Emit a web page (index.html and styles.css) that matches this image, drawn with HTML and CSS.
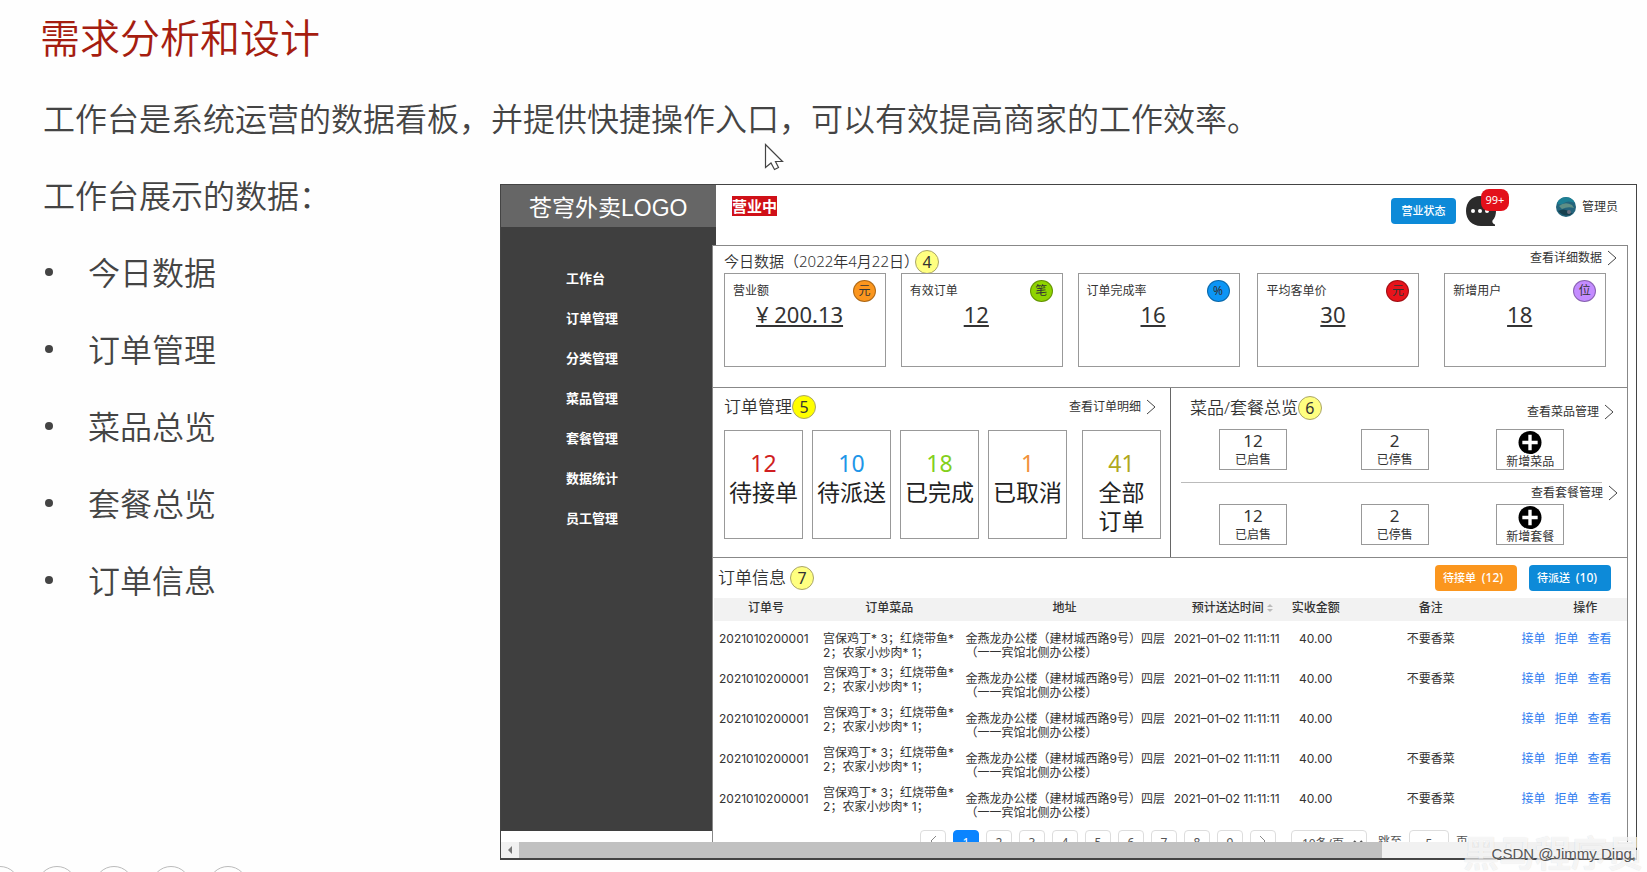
FILE: index.html
```html
<!DOCTYPE html>
<html lang="zh-CN">
<head>
<meta charset="utf-8">
<title>需求分析和设计</title>
<link rel="stylesheet" href="styles.css">
</head>
<body>
<h1 class="slide-title">需求分析和设计</h1>
<p class="lead">工作台是系统运营的数据看板，并提供快捷操作入口，可以有效提高商家的工作效率。</p>
<svg class="cursor" viewBox="0 0 20 28" aria-hidden="true"><path d="M1.500 1.500V24.500L7 20L10.500 26.500L14.500 24.500L11.500 18.500H18.500Z" fill="#fff" stroke="#444" stroke-width="1.200"/></svg>
<div class="slide-body">
  <div class="outline">
    <p>工作台展示的数据：</p>
    <ul>
      <li>今日数据</li>
      <li>订单管理</li>
      <li>菜品总览</li>
      <li>套餐总览</li>
      <li>订单信息</li>
    </ul>
  </div>
  <div class="frame">
    <div class="viewport">
      <aside class="sidebar">
        <div class="logo">苍穹外卖LOGO</div>
        <nav class="menu">
          <a href="#">工作台</a>
          <a href="#">订单管理</a>
          <a href="#">分类管理</a>
          <a href="#">菜品管理</a>
          <a href="#">套餐管理</a>
          <a href="#">数据统计</a>
          <a href="#">员工管理</a>
        </nav>
      </aside>
      <main class="main">
        <header class="topbar">
          <span class="open-tag">营业中</span>
          <button class="btn btn-state" type="button">营业状态</button>
          <div class="messages">
            <svg viewBox="0 0 32 32" aria-hidden="true"><path d="M15 1C6.500 1 1 7.500 1 16S7 31 16 31H30V29.500C27.500 28.500 27 27 27.500 25.500C30 23 31 19.500 31 16C31 7.500 24 1 15 1Z" fill="#2b2b2b"/><circle cx="8" cy="16" r="2" fill="#fff"/><circle cx="15" cy="16" r="2" fill="#fff"/><circle cx="22" cy="16" r="2" fill="#fff"/></svg>
            <span class="count">99+</span>
          </div>
          <div class="user">
            <svg viewBox="0 0 20 20" aria-hidden="true"><circle cx="10" cy="10" r="10" fill="#24647c"/><path d="M1 6A10 10 0 0 1 19 6Q12 3 8 6T1 6Z" fill="#1d8095"/><path d="M3 9Q9 4 16 8L18 11Q12 9 6 12Z" fill="#5f8f86"/><path d="M2 14Q8 11 12 14T17 16Q10 22 2 14Z" fill="#17404f"/><circle cx="13" cy="15" r="2" fill="#6b6f80"/></svg>
            <span>管理员</span>
          </div>
        </header>

        <section class="today">
          <div class="head">
            <h2 class="small">今日数据（2022年4月22日）</h2><span class="mark">4</span>
            <a class="more" href="#">查看详细数据<svg viewBox="0 0 10 16" aria-hidden="true"><path d="M1 1L9 8L1 15"/></svg></a>
          </div>
          <div class="stats">
            <div class="stat"><span>营业额</span><i class="dot orange">元</i><b>¥ 200.13</b></div>
            <div class="stat"><span>有效订单</span><i class="dot green">笔</i><b>12</b></div>
            <div class="stat"><span>订单完成率</span><i class="dot blue">%</i><b>16</b></div>
            <div class="stat"><span>平均客单价</span><i class="dot red">元</i><b>30</b></div>
            <div class="stat"><span>新增用户</span><i class="dot violet">位</i><b>18</b></div>
          </div>
        </section>

        <div class="pair">
          <section class="orders">
            <div class="head">
              <h2>订单管理</h2><span class="mark bright">5</span>
              <a class="more" href="#">查看订单明细<svg viewBox="0 0 10 16" aria-hidden="true"><path d="M1 1L9 8L1 15"/></svg></a>
            </div>
            <div class="tiles">
              <div class="tile"><b class="c-red">12</b><span>待接单</span></div>
              <div class="tile"><b class="c-blue">10</b><span>待派送</span></div>
              <div class="tile"><b class="c-green">18</b><span>已完成</span></div>
              <div class="tile"><b class="c-orange">1</b><span>已取消</span></div>
              <div class="tile"><b class="c-olive">41</b><span>全部<br>订单</span></div>
            </div>
          </section>
          <section class="dishes">
            <div class="head">
              <h2>菜品/套餐总览</h2><span class="mark">6</span>
              <a class="more" href="#">查看菜品管理<svg viewBox="0 0 10 16" aria-hidden="true"><path d="M1 1L9 8L1 15"/></svg></a>
            </div>
            <div class="boxes">
              <div class="box"><b>12</b><span>已启售</span></div>
              <div class="box"><b>2</b><span>已停售</span></div>
              <button class="box add" type="button"><svg viewBox="0 0 24 24" aria-hidden="true"><circle cx="12" cy="12" r="12"/><path d="M12 4V20M4 12H20" stroke="#fff" stroke-width="3.500"/></svg><span>新增菜品</span></button>
            </div>
            <hr class="split">
            <a class="more" href="#">查看套餐管理<svg viewBox="0 0 10 16" aria-hidden="true"><path d="M1 1L9 8L1 15"/></svg></a>
            <div class="boxes second">
              <div class="box"><b>12</b><span>已启售</span></div>
              <div class="box"><b>2</b><span>已停售</span></div>
              <button class="box add" type="button"><svg viewBox="0 0 24 24" aria-hidden="true"><circle cx="12" cy="12" r="12"/><path d="M12 4V20M4 12H20" stroke="#fff" stroke-width="3.500"/></svg><span>新增套餐</span></button>
            </div>
          </section>
        </div>

        <section class="info">
          <div class="head">
            <h2>订单信息</h2><span class="mark">7</span>
            <div class="filters">
              <button class="btn orange" type="button">待接单 <span>(12)</span></button>
              <button class="btn" type="button">待派送 <span>(10)</span></button>
            </div>
          </div>
          <table>
            <colgroup><col class="w-id"><col class="w-dish"><col class="w-addr"><col class="w-time"><col class="w-sum"><col class="w-note"><col></colgroup>
            <thead>
              <tr><th>订单号</th><th>订单菜品</th><th>地址</th><th class="th-time">预计送达时间 <svg viewBox="0 0 6 8" aria-hidden="true"><path d="M0 3L3 0L6 3ZM0 5L3 8L6 5Z" fill="#bbb"/></svg></th><th>实收金额</th><th>备注</th><th class="th-ops">操作</th></tr>
            </thead>
            <tbody>
              <tr><td>2021010200001</td><td>宫保鸡丁* 3；红烧带鱼* 2；农家小炒肉* 1；</td><td class="addr">金燕龙办公楼（建材城西路9号）四层<br>（一一宾馆北侧办公楼）</td><td class="time">2021–01–02 11:11:11</td><td class="mid">40.00</td><td class="mid">不要香菜</td><td class="ops"><a href="#">接单</a><a href="#">拒单</a><a href="#">查看</a></td></tr>
              <tr><td>2021010200001</td><td class="high">宫保鸡丁* 3；红烧带鱼* 2；农家小炒肉* 1；</td><td class="addr">金燕龙办公楼（建材城西路9号）四层<br>（一一宾馆北侧办公楼）</td><td class="time">2021–01–02 11:11:11</td><td class="mid">40.00</td><td class="mid">不要香菜</td><td class="ops"><a href="#">接单</a><a href="#">拒单</a><a href="#">查看</a></td></tr>
              <tr><td>2021010200001</td><td class="high">宫保鸡丁* 3；红烧带鱼* 2；农家小炒肉* 1；</td><td class="addr">金燕龙办公楼（建材城西路9号）四层<br>（一一宾馆北侧办公楼）</td><td class="time">2021–01–02 11:11:11</td><td class="mid">40.00</td><td class="mid"></td><td class="ops"><a href="#">接单</a><a href="#">拒单</a><a href="#">查看</a></td></tr>
              <tr><td>2021010200001</td><td class="high">宫保鸡丁* 3；红烧带鱼* 2；农家小炒肉* 1；</td><td class="addr">金燕龙办公楼（建材城西路9号）四层<br>（一一宾馆北侧办公楼）</td><td class="time">2021–01–02 11:11:11</td><td class="mid">40.00</td><td class="mid">不要香菜</td><td class="ops"><a href="#">接单</a><a href="#">拒单</a><a href="#">查看</a></td></tr>
              <tr><td>2021010200001</td><td class="high">宫保鸡丁* 3；红烧带鱼* 2；农家小炒肉* 1；</td><td class="addr">金燕龙办公楼（建材城西路9号）四层<br>（一一宾馆北侧办公楼）</td><td class="time">2021–01–02 11:11:11</td><td class="mid">40.00</td><td class="mid">不要香菜</td><td class="ops"><a href="#">接单</a><a href="#">拒单</a><a href="#">查看</a></td></tr>
            </tbody>
          </table>
          <div class="pager">
            <button type="button" aria-label="上一页"><svg viewBox="0 0 8 12" aria-hidden="true"><path d="M7 1L2 6L7 11"/></svg></button>
            <button type="button" class="on">1</button>
            <button type="button">2</button>
            <button type="button">3</button>
            <button type="button">4</button>
            <button type="button">5</button>
            <button type="button">6</button>
            <button type="button">7</button>
            <button type="button">8</button>
            <button type="button">9</button>
            <button type="button" aria-label="下一页"><svg viewBox="0 0 8 12" aria-hidden="true"><path d="M1 1L6 6L1 11"/></svg></button>
            <select aria-label="每页条数"><option>10条/页</option></select>
            <label class="jump">跳至<input type="text" value="5">页</label>
          </div>
        </section>
      </main>
    </div>
    <div class="scrollbar">
      <svg viewBox="0 0 18 16" aria-hidden="true"><path d="M11 4V12L7 8Z" fill="#777"/></svg>
      <div class="thumb"></div>
    </div>
  </div>
</div>
<footer class="tools">
  <span></span><span></span><span></span><span></span><span></span>
</footer>
<div class="brand">黑马程序员</div>
<div class="credit">CSDN @Jimmy Ding,</div>
</body>
</html>
```

FILE: styles.css
```css
* { box-sizing: border-box; }
html { height: 100%; }
body {
  margin: 0;
  min-height: 100%;
  height: 100vh;
  display: flex;
  flex-direction: column;
  position: relative;
  overflow: hidden;
  background: #fefefe;
  color: #333;
  font-family: "Noto Sans", "Noto Sans CJK SC", sans-serif;
}
h1, h2, p, ul { margin: 0; padding: 0; font-weight: 350; }
a { color: inherit; text-decoration: none; }
button, input, select { font: inherit; color: inherit; }
b, i { font-weight: 400; font-style: normal; }

.slide-title {
  padding-left: 40px;
  margin-bottom: 7px;
  font-size: 40px;
  line-height: 72px;
  color: #a51d10;
  font-family: "Noto Sans CJK SC", sans-serif;
}
.lead, .outline {
  padding-left: 43px;
  font-size: 32px;
  line-height: 77px;
  font-weight: 350;
  color: #444;
  font-family: "Noto Sans CJK SC", sans-serif;
}
.lead { white-space: nowrap; }
.cursor { position: absolute; left: 764px; top: 143px; width: 20px; height: 28px; }
.slide-body { flex: 1; min-height: 0; display: flex; }
.outline { width: 500px; flex: none; }
.outline ul { list-style: none; }
.outline li { display: flex; align-items: center; }
.outline li::before {
  content: "";
  width: 8px;
  height: 8px;
  margin: 0 35px 0 2px;
  border-radius: 50%;
  background: #444;
}

.frame {
  flex: 1;
  min-width: 0;
  display: flex;
  flex-direction: column;
  margin: 28px 10px 0 0;
  border: 1px solid #444;
  border-bottom-width: 2px;
  background: #fff;
}
.viewport { flex: 1; min-height: 0; display: flex; overflow: hidden; }
.sidebar {
  width: 215px;
  flex: none;
  margin-bottom: 11px;
  background: #3f3f3f;
  color: #fff;
}
.logo {
  height: 42px;
  padding: 2px 0 0 28px;
  background: #666;
  font: 23px/42px "Liberation Sans", "Noto Sans CJK SC", sans-serif;
}
.menu {
  display: flex;
  flex-direction: column;
  align-items: flex-start;
  padding: 31px 0 0 65px;
}
.menu a { font-size: 13px; line-height: 40px; font-weight: 700; }

.main { flex: 1; min-width: 0; }
.topbar { height: 60px; padding: 4px 18px 0 16px; display: flex; align-items: flex-start; }
.open-tag {
  margin: 7px auto 0 0;
  background: #d01018;
  color: #fff;
  font-size: 15px;
  line-height: 20px;
  font-weight: 700;
}
.btn {
  height: 26px;
  padding: 0;
  border: 0;
  border-radius: 4px;
  background: #0d8ad8;
  color: #fff;
  font-size: 11px;
  line-height: 26px;
  font-weight: 500;
}
.btn-state { width: 65px; margin-top: 9px; }
.messages { position: relative; width: 32px; height: 32px; margin: 6px 59px 0 9px; }
.messages svg { display: block; width: 32px; height: 32px; }
.count {
  position: absolute;
  left: 16px;
  top: -6px;
  width: 28px;
  border-radius: 8px;
  background: #e3101a;
  color: #fff;
  font-size: 11px;
  line-height: 22px;
  text-align: center;
}
.user { display: flex; align-items: center; gap: 6px; margin-top: 8px; font-size: 12px; line-height: 20px; }
.user svg { width: 20px; height: 20px; }

.today, .pair, .info { margin: 0 8px 0 -4px; background: #fff; border: 1px solid #888; }
.today { height: 143px; padding: 4px 0 0 11px; }
.head { display: flex; align-items: center; height: 24px; }
.head h2 { font-size: 17px; line-height: 24px; }
.today .head { align-items: flex-start; height: 23px; }
.head h2.small { font-size: 15px; line-height: 22px; margin-right: -4px; }
.mark {
  width: 24px;
  height: 24px;
  border: 1px solid #aaa56a;
  border-radius: 50%;
  background: #ffff80;
  font-size: 16px;
  line-height: 22px;
  text-align: center;
}
.mark.bright { background: #ff0; }
.more {
  display: flex;
  align-items: center;
  justify-content: flex-end;
  gap: 5px;
  margin-left: auto;
  font-size: 12px;
  line-height: 16px;
}
.more svg { width: 10px; height: 16px; fill: none; stroke: #444; stroke-width: 1; }
.today .more { margin-right: 10px; }
.stats { display: grid; grid-template-columns: 177fr 177fr 180fr 187fr 183fr; }
.stat {
  width: 162px;
  height: 94px;
  padding: 6px 9px 0 8px;
  border: 1px solid #999;
  display: grid;
  grid-template-columns: 1fr 23px;
  grid-template-rows: 22px 24px;
  align-items: center;
  font-size: 12px;
  line-height: 16px;
  background: #fff;
}
.stat b {
  grid-column: 1 / -1;
  padding-right: 10px;
  font-size: 22px;
  line-height: 20px;
  text-align: center;
  text-decoration: underline;
  text-decoration-thickness: 2px;
  text-underline-offset: 2px;
}
.dot {
  width: 23px;
  height: 22px;
  border: 1px solid rgba(0, 0, 0, .3);
  border-radius: 50%;
  line-height: 20px;
  text-align: center;
}
.orange { background: #fb961e; }
.green { background: #8fd400; }
.blue { background: #0c95f5; }
.red { background: #e8131b; }
.violet { background: #c48cff; }

.pair { display: grid; grid-template-columns: 1fr 1fr; height: 170px; border-top: 0; }
.orders { padding: 7px 9px 0 11px; }
.orders .more { margin-right: 5px; }
.tiles { display: grid; grid-template-columns: 88fr 88fr 88fr 94fr 79px; margin-top: 11px; }
.tile {
  width: 79px;
  height: 109px;
  padding-top: 18px;
  border: 1px solid #999;
  display: flex;
  flex-direction: column;
  font-size: 23px;
  line-height: 29px;
  text-align: center;
  color: #222;
  white-space: nowrap;
}
.c-red { color: #d01e22; }
.c-blue { color: #1e96e8; }
.c-green { color: #84d01c; }
.c-orange { color: #f2913a; }
.c-olive { color: #b0a81c; }
.dishes { padding: 8px 9px 0 19px; border-left: 1px solid #666; }
.dishes .head { align-items: flex-end; }
.dishes .head .more { margin-right: 4px; }
.boxes { display: grid; grid-template-columns: 142fr 136fr 122fr; margin: 9px 0 0 29px; }
.box {
  width: 68px;
  height: 41px;
  padding: 0;
  border: 1px solid #999;
  background: #fff;
  display: flex;
  flex-direction: column;
  align-items: center;
  font-size: 12px;
  line-height: 16px;
}
.box b { font-size: 17px; line-height: 22px; }
.box svg { width: 24px; height: 24px; margin-top: 1px; }
.box.add span { line-height: 15px; }
.split { border: 0; border-top: 1px solid #bbb; margin: 12px 16px 2px -9px; }
.boxes.second { margin-top: 3px; }

.info { border-top: 0; padding: 8px 0 0 1px; }
.info .head { padding-left: 4px; }
.info .mark { margin-left: 4px; }
.filters { display: flex; gap: 12px; margin: 0 16px 0 auto; }
.filters .btn { width: 82px; padding-right: 6px; }
.filters span { font-size: 12px; margin-left: 3px; }
table {
  width: 100%;
  margin-top: 8px;
  border-collapse: collapse;
  table-layout: fixed;
  font-size: 12px;
  line-height: 14px;
  font-family: Inter, "Noto Sans CJK SC", sans-serif;
}
th { height: 23px; padding: 0 0 4px; background: #f2f2f2; font-weight: 500; }
th svg { width: 6px; height: 8px; }
.w-id { width: 11.4%; }
.w-dish { width: 15.6%; }
.w-addr { width: 22.8%; }
.w-time { width: 12.8%; }
.w-sum { width: 6.6%; }
.w-note { width: 18.6%; }
th.th-time { text-align: left; padding-left: 23px; white-space: nowrap; }
th.th-ops { padding-left: 28px; }
td { height: 40px; padding: 6px 5px; vertical-align: top; }
tbody::before { content: ""; display: block; height: 5px; }
td.high { padding: 0 5px 12px; }
td.addr, td.time, td.mid { padding-right: 0; white-space: nowrap; }
td.mid { padding-left: 0; text-align: center; }
td.ops { padding: 6px 0 6px 6px; color: #2e7cf0; white-space: nowrap; }
.ops a { margin-right: 9px; }

.pager { display: flex; gap: 7px; margin: 4px 0 0 206px; font-size: 12px; line-height: 24px; color: #555; }
.pager button, .pager select, .pager input {
  height: 26px;
  padding: 0;
  border: 1px solid #ddd;
  border-radius: 4px;
  background: #fff;
  text-align: center;
}
.pager button { width: 26px; }
.pager svg { width: 8px; height: 12px; fill: none; stroke: #888; }
.pager .on { background: #0a84ff; border-color: #0a84ff; color: #fff; }
.pager select { width: 76px; margin: 0 4px 0 8px; }
.jump { display: flex; gap: 7px; }
.pager input { width: 40px; }

.scrollbar { flex: none; height: 16px; display: flex; background: #f1f1f1; }
.scrollbar svg { flex: none; width: 18px; height: 16px; }
.thumb { width: 76%; background: #c1c1c1; }
.tools {
  flex: none;
  height: 12px;
  padding-top: 6px;
  display: flex;
  gap: 17px;
  overflow: hidden;
}
.tools span { flex: none; width: 40px; height: 40px; border: 1px solid #bbb; border-radius: 50%; }
.tools span:first-child { margin-left: -20px; }
.brand {
  position: absolute;
  right: 4px;
  bottom: 0;
  font-size: 36px;
  line-height: 36px;
  font-weight: 700;
  color: rgba(255, 255, 255, .75);
  text-shadow: 0 0 1px rgba(0, 0, 0, .15);
}
.credit {
  position: absolute;
  right: 11px;
  bottom: 8px;
  font: 15px/20px "Liberation Sans", sans-serif;
  color: #555;
  text-shadow: 0 0 2px #fff;
}
```
